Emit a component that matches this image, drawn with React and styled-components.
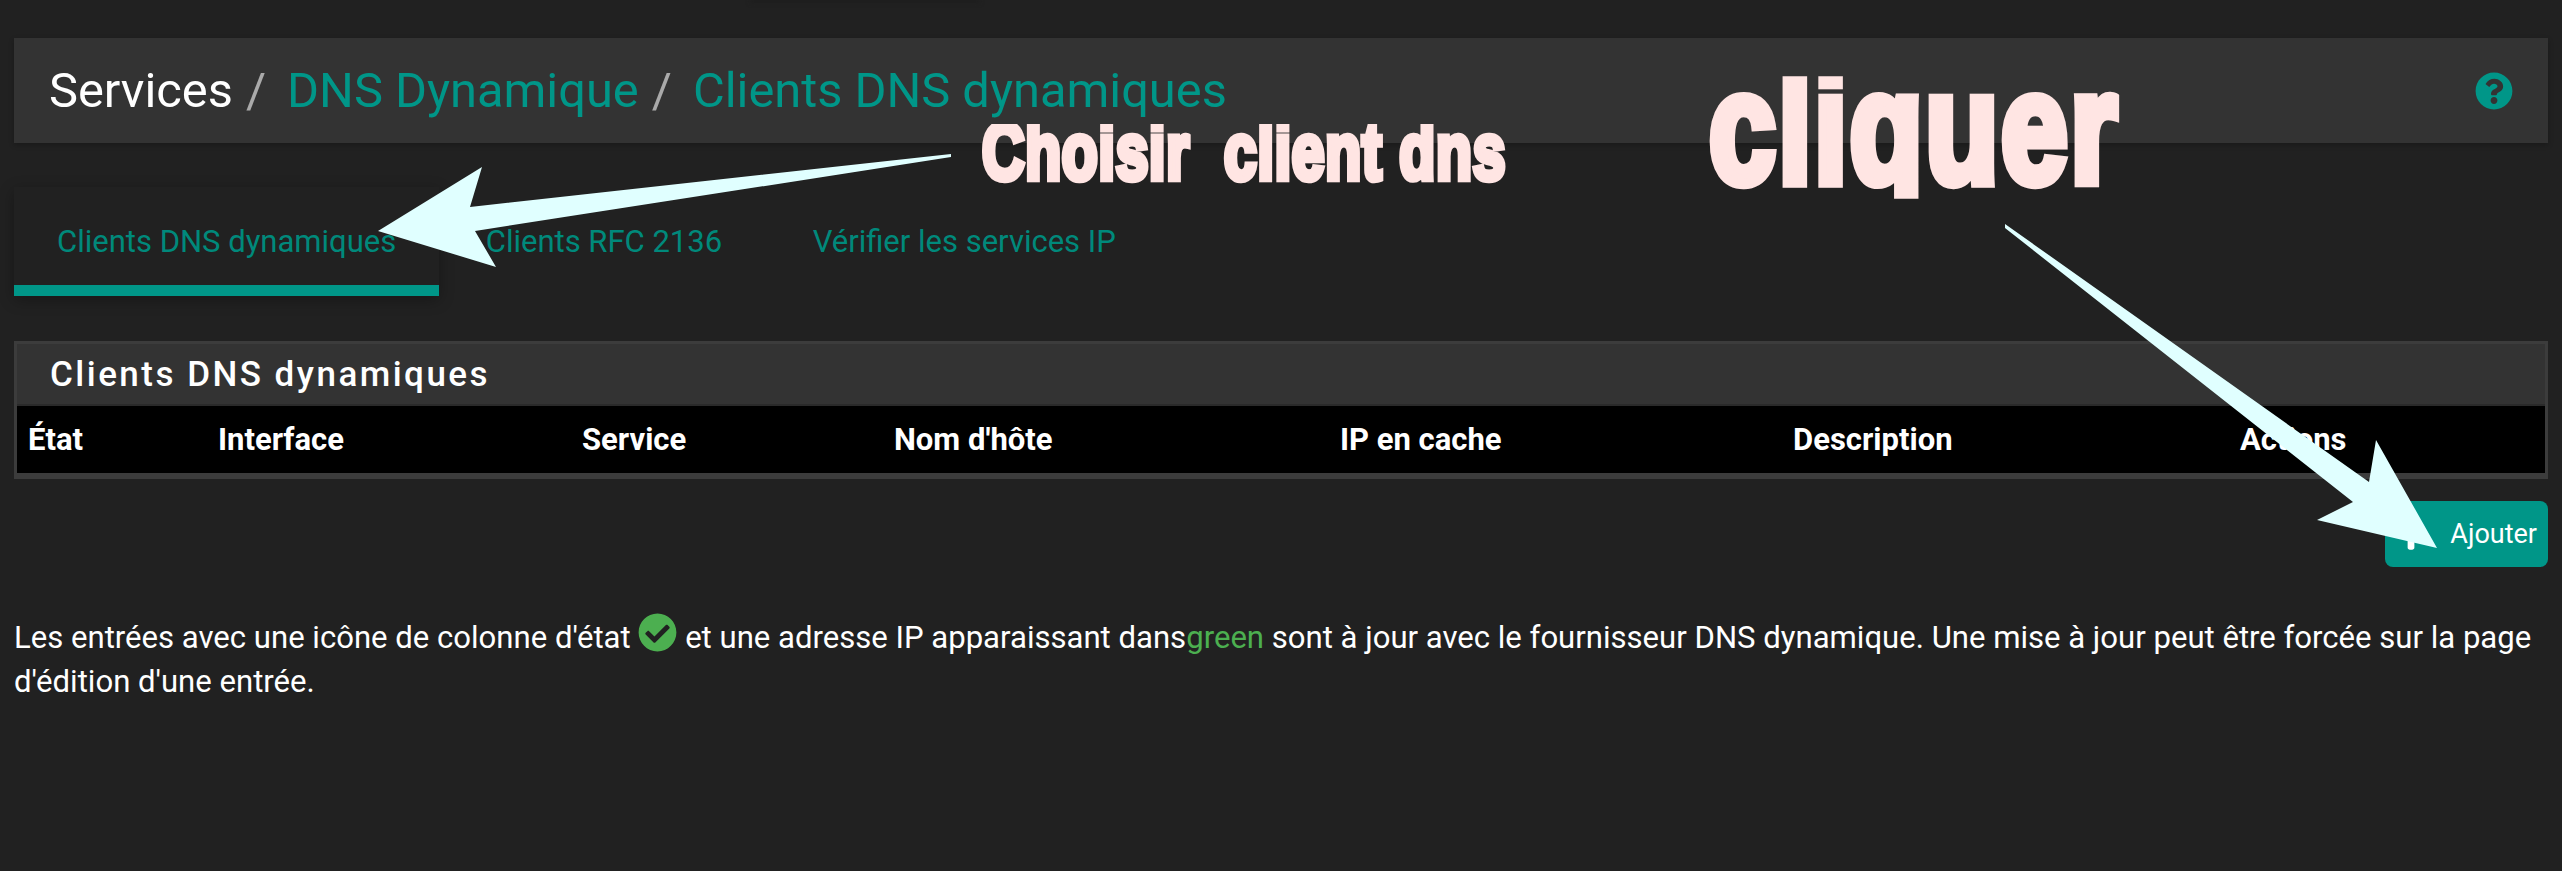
import React from 'react'
import styled, { createGlobalStyle } from 'styled-components'
import { FaQuestionCircle, FaCheckCircle, FaPlus } from 'react-icons/fa'

const GlobalStyle = createGlobalStyle`
    html, body {
        margin: 0;
        background: #212121;
    }
    body {
        font-family: Roboto, 'Liberation Sans', sans-serif;
        color: #fff;
    }
`

const Page = styled.div`
    position: relative;
    width: 2562px;
    height: 871px;
    overflow: hidden;
    box-sizing: border-box;
    padding: 38px 14px 0;
`
const TopShadow = styled.div`
    position: absolute;
    top: 0;
    left: 750px;
    width: 230px;
    height: 3px;
    background: #1d1d1d;
    filter: blur(2px);
`
const Breadcrumb = styled.div`
    height: 105px;
    background: #333;
    box-shadow: 0 2px 5px rgba(0, 0, 0, .25);
    display: flex;
    align-items: center;
    justify-content: space-between;
    padding: 0 35px;
    font-size: 48.8px;
`
const Crumbs = styled.div`
    display: flex;
    align-items: baseline;
`
const Crumb = styled.span`
    color: ${p => (p.$link ? '#009688' : '#fff')};
`
const Sep = styled.span`
    color: #aaa;
    padding: 0 21px 0 13px;
`
const HelpIcon = styled(FaQuestionCircle)`
    color: #009688;
    width: 38px;
    height: 38px;
`
const Tabs = styled.div`
    display: flex;
    gap: 2.5px;
    margin-top: 44px;
    height: 109px;
`
const Tab = styled.div`
    box-sizing: border-box;
    padding: 0 ${p => (p.$active ? 43 : 44)}px;
    display: flex;
    align-items: center;
    font-size: 31px;
    color: #00897b;
    box-shadow: ${p => (p.$active ? 'inset 0 -11px 0 #009688, 0 4px 14px rgba(0, 0, 0, .3)' : 'none')};
`
const Panel = styled.div`
    margin-top: 45px;
    height: 138px;
    box-sizing: border-box;
    background: #3c3c3c;
    padding: 3px 3px 6px;
    display: flex;
    flex-direction: column;
`
const PanelHeading = styled.h2`
    margin: 0;
    height: 60px;
    background: #333;
    border-bottom: 2px solid #2a2a2a;
    display: flex;
    align-items: center;
    padding-left: 33px;
    font-size: 35px;
    font-weight: 500;
    letter-spacing: 2.48px;
`
const HeadRow = styled.div`
    flex: 1;
    background: #000;
    display: grid;
    grid-template-columns: 190px 364px 312px 446px 453px 447px 1fr;
    align-items: center;
    padding-left: 11px;
`
const HeadCell = styled.div`
    font-size: 31px;
    font-weight: 700;
`
const ButtonRow = styled.div`
    display: flex;
    justify-content: flex-end;
    margin-top: 22px;
`
const AddButton = styled.button`
    width: 163px;
    height: 66px;
    border: 0;
    border-radius: 8px;
    background: #009688;
    color: #fff;
    font-family: inherit;
    font-size: 27px;
    display: flex;
    align-items: center;
    justify-content: flex-end;
    gap: 21px;
    padding: 0 11px 0 0;
`
const Note = styled.p`
    margin: 46px 0 0;
    font-size: 31.1px;
    line-height: 44px;
`
const CheckIcon = styled(FaCheckCircle)`
    color: #4caf50;
    width: 39px;
    height: 39px;
    vertical-align: -4px;
`
const Green = styled.span`
    color: #4caf50;
`
const Callouts = styled.svg`
    position: absolute;
    inset: 0;
    pointer-events: none;
`
const Caption = styled.div`
    position: absolute;
    left: ${p => p.$x}px;
    top: ${p => p.$y}px;
    font-family: 'Liberation Sans', sans-serif;
    font-weight: 700;
    font-size: ${p => p.$size}px;
    line-height: 1;
    letter-spacing: ${p => p.$spacing}px;
    white-space: pre;
    color: #ffe5e3;
    -webkit-text-stroke: ${p => p.$stroke}px #ffe5e3;
    transform: scale(${p => p.$sx}, ${p => p.$sy});
    transform-origin: 0 0;
    clip-path: ${p => p.$clip};
`

function App() {
    return (
        <Page>
            <GlobalStyle />
            <TopShadow />
            <Breadcrumb>
                <Crumbs>
                    <Crumb>Services</Crumb>
                    <Sep>/</Sep>
                    <Crumb $link>DNS Dynamique</Crumb>
                    <Sep>/</Sep>
                    <Crumb $link>Clients DNS dynamiques</Crumb>
                </Crumbs>
                <HelpIcon />
            </Breadcrumb>
            <Tabs>
                <Tab $active>Clients DNS dynamiques</Tab>
                <Tab>Clients RFC 2136</Tab>
                <Tab>Vérifier les services IP</Tab>
            </Tabs>
            <Panel>
                <PanelHeading>Clients DNS dynamiques</PanelHeading>
                <HeadRow>
                    <HeadCell>État</HeadCell>
                    <HeadCell>Interface</HeadCell>
                    <HeadCell>Service</HeadCell>
                    <HeadCell>Nom d'hôte</HeadCell>
                    <HeadCell>IP en cache</HeadCell>
                    <HeadCell>Description</HeadCell>
                    <HeadCell>Actions</HeadCell>
                </HeadRow>
            </Panel>
            <ButtonRow>
                <AddButton><FaPlus size={36} />Ajouter</AddButton>
            </ButtonRow>
            <Note>
                Les entrées avec une icône de colonne d'état <CheckIcon /> et une adresse IP apparaissant dans<Green>green</Green> sont à jour avec le fournisseur DNS dynamique. Une mise à jour peut être forcée sur la page d'édition d'une entrée.
            </Note>
            <Callouts width="2562" height="871" viewBox="0 0 2562 871">
                <polygon fill="#e0ffff" points="951,154 470,207 482,167 378,231 496,267 475,231 951,157" />
                <polygon fill="#e0ffff" points="2005,224 2369,482 2376,440 2437,548 2317,520 2353,502 2005,228" />
            </Callouts>
            <Caption $x={982} $y={112} $size={72} $sx={0.815} $sy={1.1} $stroke={6} $spacing={1} $clip="inset(11px -10px 0 -10px)">Choisir  client dns</Caption>
            <Caption $x={1709} $y={49} $size={150} $sx={0.8} $sy={1.047} $stroke={10} $spacing={3} $clip="inset(26px -10px 7px -10px)">cliquer</Caption>
        </Page>
    )
}

export default App
